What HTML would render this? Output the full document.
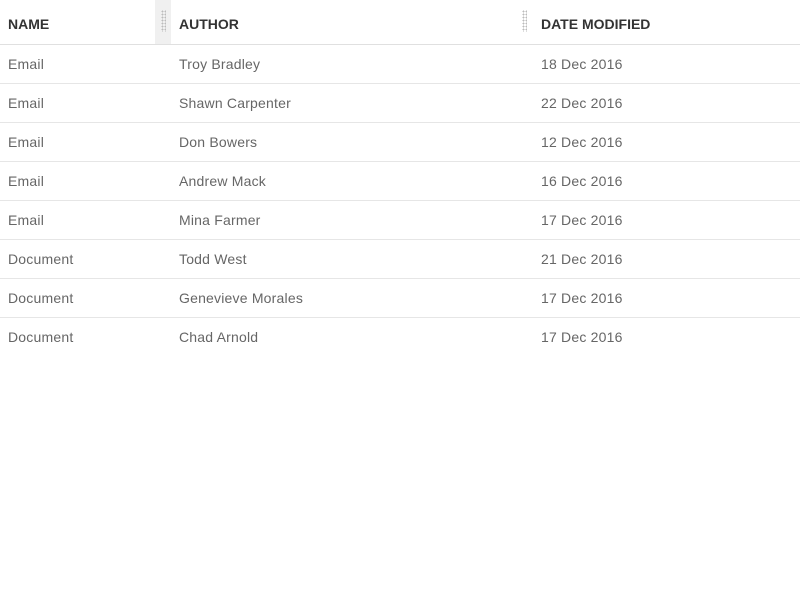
<!DOCTYPE html>
<html><head><style>
body{margin:0;width:800px;height:600px;background:#fff;font-family:"Liberation Sans",sans-serif;position:relative;overflow:hidden}
.h{position:absolute;top:0;left:0;width:800px;height:44px;border-bottom:1px solid #e0e0e0}
.h span{position:absolute;top:16px;font-size:14px;font-weight:bold;color:#333}
.grip{position:absolute;top:10px;width:5px;height:22px;background-image:radial-gradient(#bbb 0.8px,transparent 1px);background-size:3px 3px}
.r{position:absolute;left:0;width:800px;height:38px;border-bottom:1px solid #e6e6e6;font-size:14px;color:#666;letter-spacing:0.2px}
.r span{position:absolute;top:11px}
</style></head><body>
<div class="h">
<div style="position:absolute;left:155px;top:0;width:16px;height:44px;background:#f0f0f0"></div>
<div class="grip" style="left:161px"></div>
<div class="grip" style="left:522px"></div>
<span style="left:8px">NAME</span><span style="left:179px">AUTHOR</span><span style="left:541px">DATE MODIFIED</span>
</div>
<div class="r" style="top:45px"><span style="left:8px">Email</span><span style="left:179px">Troy Bradley</span><span style="left:541px">18 Dec 2016</span></div>
<div class="r" style="top:84px"><span style="left:8px">Email</span><span style="left:179px">Shawn Carpenter</span><span style="left:541px">22 Dec 2016</span></div>
<div class="r" style="top:123px"><span style="left:8px">Email</span><span style="left:179px">Don Bowers</span><span style="left:541px">12 Dec 2016</span></div>
<div class="r" style="top:162px"><span style="left:8px">Email</span><span style="left:179px">Andrew Mack</span><span style="left:541px">16 Dec 2016</span></div>
<div class="r" style="top:201px"><span style="left:8px">Email</span><span style="left:179px">Mina Farmer</span><span style="left:541px">17 Dec 2016</span></div>
<div class="r" style="top:240px"><span style="left:8px">Document</span><span style="left:179px">Todd West</span><span style="left:541px">21 Dec 2016</span></div>
<div class="r" style="top:279px"><span style="left:8px">Document</span><span style="left:179px">Genevieve Morales</span><span style="left:541px">17 Dec 2016</span></div>
<div class="r" style="top:318px;border-bottom:none"><span style="left:8px">Document</span><span style="left:179px">Chad Arnold</span><span style="left:541px">17 Dec 2016</span></div>
</body></html>
